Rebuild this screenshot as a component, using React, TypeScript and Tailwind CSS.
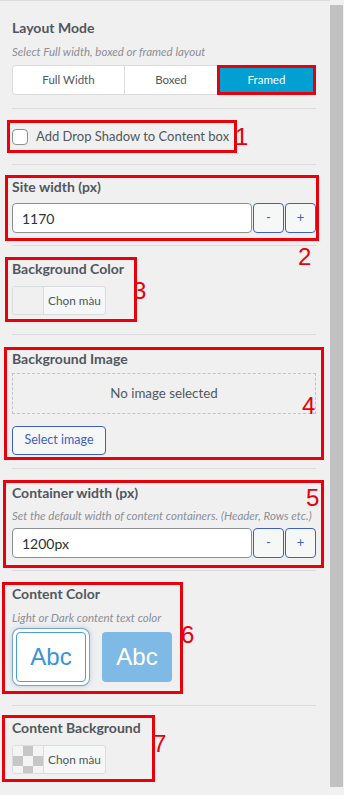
import React from "react";

const RED = "border-[#e8000b]";

function Title({ children, className = "" }: { children: React.ReactNode; className?: string }) {
  return (
    <div className={"whitespace-nowrap text-[14px] font-bold leading-[18px] text-[#50575e] " + className}>
      {children}
    </div>
  );
}

function Desc({ children, className = "" }: { children: React.ReactNode; className?: string }) {
  return (
    <div className={"whitespace-nowrap text-[11.5px] italic leading-4 text-[#8c8f94] " + className}>{children}</div>
  );
}

function Sep({ className = "" }: { className?: string }) {
  return <div className={"h-px bg-[#dcdcde] " + className} />;
}

function Num({ n, className }: { n: string; className: string }) {
  return (
    <span
      className={
        "absolute font-['Liberation_Sans',Arial,sans-serif] text-[24px] leading-6 text-[#e8000b] " + className
      }
    >
      {n}
    </span>
  );
}

function NumberField({ value }: { value: string }) {
  return (
    <div className="flex h-[30px] gap-px">
      <div className="flex flex-1 items-center rounded border border-[#8c8f94] bg-white pl-[9px] text-[14px] text-[#2c3338]">
        {value}
      </div>
      <button className="w-[31px] rounded border border-[#4060c0] bg-[#f6f7f7] text-[13px] text-[#4060c0]">-</button>
      <button className="w-[31px] rounded border border-[#4060c0] bg-[#f6f7f7] text-[13px] text-[#4060c0]">+</button>
    </div>
  );
}

function ColorButton({ checker }: { checker?: boolean }) {
  return (
    <div className="flex h-[29px] w-[94px] overflow-hidden rounded-[3px] border border-[#dcdcde] bg-[#f6f7f7]">
      <div
        className={
          "w-[31px] border-r border-[#dcdcde] " +
          (checker
            ? "bg-[conic-gradient(#c7c7c7_25%,#f4f4f4_0_50%,#c7c7c7_0_75%,#f4f4f4_0)] bg-size-[20px_20px]"
            : "bg-[#f0f0f1]")
        }
      />
      <div className="flex flex-1 items-center justify-center whitespace-nowrap text-[11.8px] text-[#50575e]">
        Chọn màu
      </div>
    </div>
  );
}

export default function App() {
  return (
    <div className="flex h-[795px] w-[344px] overflow-hidden bg-[#f0f0f1] font-['Lato',sans-serif]">
      <div className="w-[330px] border-t border-[#dcdcde] pl-3 pr-[14px]">
        {/* Layout mode */}
        <Title className="mt-[18px]">Layout Mode</Title>
        <Desc className="mt-[7px]">Select Full width, boxed or framed layout</Desc>
        <div className="mt-[5px] flex h-[30px] text-[11.5px]">
          <div className="flex w-[205px] overflow-hidden rounded-l border border-r-0 border-[#dcdcde] bg-white text-[#50575e]">
            <div className="flex w-[112px] items-center justify-center border-r border-[#dcdcde]">Full Width</div>
            <div className="flex flex-1 items-center justify-center">Boxed</div>
          </div>
          <div className={"flex flex-1 items-center justify-center border-[3px] bg-[#00a0d2] text-white " + RED}>
            Framed
          </div>
        </div>
        <Sep className="mt-[13px]" />

        {/* 1 */}
        <div className={"relative mt-[11px] ml-[-5px] flex h-[33px] w-[230px] items-center border-[3px] pl-[2px] " + RED}>
          <span className="h-4 w-4 shrink-0 rounded border border-[#8c8f94] bg-white" />
          <span className="ml-2 whitespace-nowrap text-[13px] text-[#50575e]">Add Drop Shadow to Content box</span>
          <Num n="1" className="left-[calc(100%+1px)] top-[2px]" />
        </div>
        <Sep className="mt-[11px]" />

        {/* 2 */}
        <div className={"relative mt-[10px] ml-[-7px] mr-[-3px] border-[3px] pb-[5px] pl-1 " + RED}>
          <Title>Site width (px)</Title>
          <div className="mt-[7px]">
            <NumberField value="1170" />
          </div>
          <Num n="2" className="left-[290px] top-[67px]" />
        </div>
        <Sep className="mt-[4px]" />

        {/* 3 */}
        <div className={"relative mt-[11px] ml-[-7px] w-[132px] border-[3px] pb-1 pl-1 " + RED}>
          <Title>Background Color</Title>
          <div className="mt-[8px]">
            <ColorButton />
          </div>
          <Num n="3" className="left-[calc(100%-1px)] top-[19px]" />
        </div>
        <Sep className="mt-[12px]" />

        {/* 4 */}
        <div className={"relative mt-[12px] ml-[-8px] mr-[-8px] border-[3px] px-[5px] pb-[2px] " + RED}>
          <Title>Background Image</Title>
          <div className="mt-[5px] flex h-[41px] items-center justify-center border border-dashed border-[#c3c4c7] text-[13.3px] text-[#50575e]">
            No image selected
          </div>
          <button className="mt-[12px] h-[29px] w-[94px] rounded border border-[#4060c0] bg-[#f6f7f7] text-[12.5px] text-[#4060c0]">
            Select image
          </button>
          <Num n="4" className="left-[295px] top-[44px]" />
        </div>
        <Sep className="mt-[8px]" />

        {/* 5 */}
        <div className={"relative mt-[11px] ml-[-9px] mr-[-8px] border-[3px] pb-[7px] pl-[6px] pr-[5px] pt-px " + RED}>
          <Title>Container width (px)</Title>
          <Desc className="mt-[6px] text-[11.2px]">Set the default width of content containers. (Header, Rows etc.)</Desc>
          <div className="mt-[4px]">
            <NumberField value="1200px" />
          </div>
          <Num n="5" className="left-[300px] top-[3px]" />
        </div>
        <Sep className="mt-[2px]" />

        {/* 6 */}
        <div className={"relative mt-[11px] ml-[-10px] w-[181px] border-[3px] pb-[9px] pl-[7px] " + RED}>
          <Title className="leading-4">Content Color</Title>
          <Desc className="mt-[7px]">Light or Dark content text color</Desc>
          <div className="mt-[6px] ml-1 flex gap-4 font-['Liberation_Sans',Arial,sans-serif] text-[24px]">
            <div className="flex h-[50px] w-[70px] items-center justify-center rounded border border-[#4a9fd8] bg-white text-[#3a94d2] shadow-[0_0_0_3px_#fff,0_0_0_4px_#7aa6c8,0_0_5px_4px_rgba(122,166,200,0.5)]">
              Abc
            </div>
            <div className="flex h-[50px] w-[70px] items-center justify-center rounded bg-[#7fb9e6] text-white">Abc</div>
          </div>
          <Num n="6" className="left-[calc(100%+1px)] top-[38px]" />
        </div>
        <Sep className="mt-[11px]" />

        {/* 7 */}
        <div className={"relative mt-[9px] ml-[-10px] w-[153px] border-[3px] pb-[5px] pl-[7px] pt-px " + RED}>
          <Title>Content Background</Title>
          <div className="mt-[8px]">
            <ColorButton checker />
          </div>
          <Num n="7" className="left-[calc(100%+1px)] top-[14px]" />
        </div>
      </div>

      {/* scrollbar */}
      <div className="flex w-[14px] flex-col bg-[#f1f1f1] pb-[8px] pt-[5px]">
        <div className="w-[13px] flex-1 bg-[#c1c1c1]" />
      </div>
    </div>
  );
}
